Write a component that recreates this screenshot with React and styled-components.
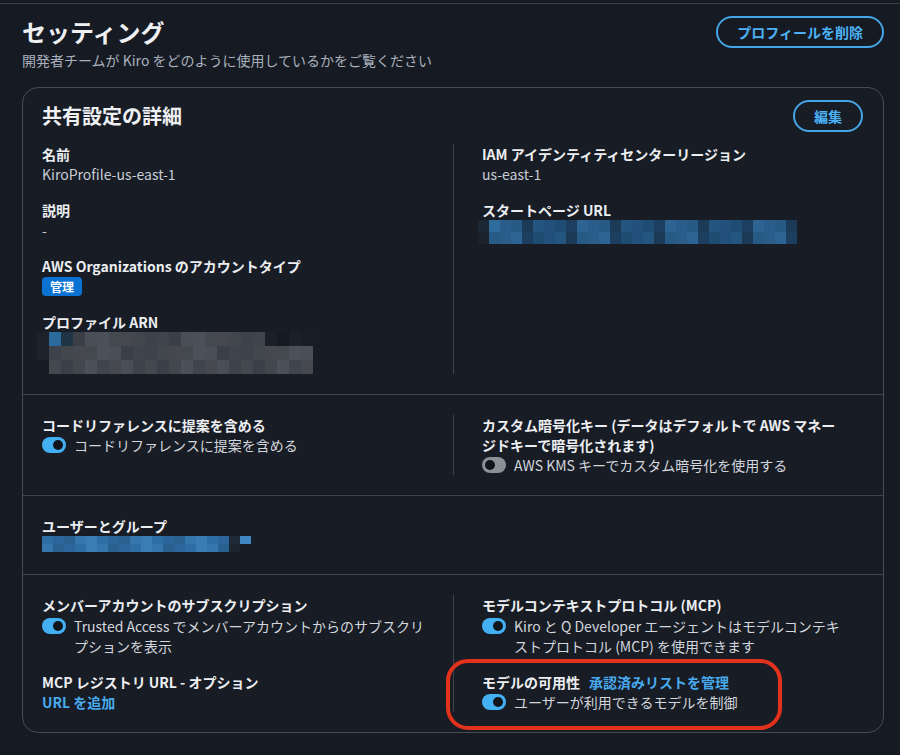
import React from 'react';
import styled, { createGlobalStyle } from 'styled-components';

const GlobalStyle = createGlobalStyle`
    html, body {
        margin: 0;
        padding: 0;
        background: #161a23;
    }
    body {
        font-family: "Noto Sans CJK JP", "Noto Sans", sans-serif;
        color: #d1d5db;
        font-size: 14px;
        line-height: 20px;
    }
`;

const Page = styled.div`
    width: 900px;
    height: 755px;
    box-sizing: border-box;
    border-top: 1px solid #3b4049;
    margin-top: 3px;
    padding: 12px 16px 0 22px;
    overflow: hidden;
`;

const PageHeader = styled.div`
    display: flex;
    align-items: center;
    justify-content: space-between;
`;

const Title = styled.h1`
    margin: 0;
    font-size: 24px;
    line-height: 30px;
    font-weight: 700;
    color: #eef0f3;
`;

const Subtitle = styled.p`
    margin: 2px 0 0;
    color: #aab1bc;
    font-size: 14px;
    line-height: 20px;
`;

const PillButton = styled.button`
    font-family: inherit;
    font-size: 14px;
    line-height: 20px;
    font-weight: 700;
    color: #4cb2f5;
    background: transparent;
    border: 2px solid #42a6e8;
    border-radius: 20px;
    padding: 4px 19px;
    cursor: pointer;
`;

const Card = styled.section`
    margin-top: 17px;
    border: 1px solid #464c55;
    border-radius: 16px;
    background: #171c25;
`;

const CardHeader = styled.div`
    display: flex;
    align-items: center;
    justify-content: space-between;
    padding: 12px 20px 0 19px;
`;

const CardTitle = styled.h2`
    margin: 0;
    font-size: 20px;
    line-height: 28px;
    font-weight: 700;
    color: #eef0f3;
`;

const Section = styled.div`
    display: grid;
    grid-template-columns: ${(p) => (p.$single ? '1fr' : '1fr 1fr')};
    padding: ${(p) => p.$pad || '20px 0'};
    border-top: ${(p) => (p.$first ? 'none' : '1px solid #3e444d')};
`;

const Column = styled.div`
    display: flex;
    flex-direction: column;
    gap: 16px;
    padding: ${(p) => (p.$right ? '0 40px 0 28px' : '0 28px 0 19px')};
    border-left: ${(p) => (p.$right ? '1px solid #3e444d' : 'none')};
`;

const Item = styled.div`
    position: relative;
    display: flex;
    flex-direction: column;
`;

const Label = styled.div`
    font-weight: 700;
    color: #eceef1;
    display: flex;
    gap: 9px;
`;

const Value = styled.div`
    color: #c9cdd4;
`;

const Link = styled.a`
    color: #48aaec;
    font-weight: 700;
    text-decoration: none;
    cursor: pointer;
`;

const Badge = styled.span`
    align-self: flex-start;
    margin-top: 1px;
    background: #0972d3;
    color: #ffffff;
    font-size: 12px;
    line-height: 19px;
    font-weight: 700;
    padding: 0 8px;
    border-radius: 4px;
`;

const ToggleRow = styled.div`
    display: flex;
    align-items: flex-start;
    gap: 8px;
    margin-top: ${(p) => p.$shift || 0}px;
    color: #d3d7dd;
`;

const Track = styled.span`
    flex: none;
    position: relative;
    width: 24px;
    height: 16px;
    margin-top: 2px;
    border-radius: 8px;
    background: ${(p) => (p.$on ? '#44b0f4' : '#8b8f96')};
`;

const Knob = styled.span`
    position: absolute;
    top: 3px;
    left: ${(p) => (p.$on ? '11px' : '3px')};
    width: 10px;
    height: 10px;
    border-radius: 50%;
    background: #10151c;
`;

const Mosaic = styled.div`
    display: flex;
    flex-direction: column;
    margin-left: ${(p) => p.$offset || 0}px;
    filter: blur(0.7px);
`;

const MosaicRow = styled.div`
    display: flex;
`;

const Cell = styled.span`
    width: ${(p) => p.$w}px;
    height: ${(p) => p.$h}px;
    background: ${(p) => p.$c};
`;

const Highlight = styled.div`
    position: absolute;
    left: -36px;
    top: -13px;
    width: 336px;
    height: 71px;
    box-sizing: border-box;
    border: 4px solid #e3321c;
    border-radius: 22px;
    pointer-events: none;
`;

const Toggle = ({ on, shift, children }) => (
    <ToggleRow $shift={shift}>
        <Track $on={on}>
            <Knob $on={on} />
        </Track>
        <span>{children}</span>
    </ToggleRow>
);

const Pixels = ({ rows, w, h, offset }) => (
    <Mosaic $offset={offset}>
        {rows.map((row, i) => (
            <MosaicRow key={i}>
                {row.map((c, j) => (
                    <Cell key={j} $w={w} $h={h} $c={c} />
                ))}
            </MosaicRow>
        ))}
    </Mosaic>
);

const g = ['#3b3f47', '#44484f', '#3e424a', '#4a4e56', '#45494f', '#40444c', '#4c5058', '#42464d'];
const arnRows = [
    ['#1b222c', '#2b6a9c', '#1f3445', ...Array.from({ length: 16 }, (_, i) => g[(i * 3) % 8]), '#1a1f28', '#141922', '#1c2129', '#181d26'],
    ['#1e232b', ...Array.from({ length: 22 }, (_, i) => g[(i * 5 + 2) % 8])],
    ['#171c25', ...Array.from({ length: 22 }, (_, i) => g[(i * 7 + 1) % 8])],
];

const b = ['#1f4c73', '#2a5d8a', '#24557f', '#1d3f5f', '#275a85', '#22507a', '#2e6494', '#1b3a58'];
const urlRows = [
    ['#1b2733', '#2f6c9e', ...Array.from({ length: 27 }, (_, i) => b[(i * 3 + 1) % 8])],
    ['#19222d', ...Array.from({ length: 28 }, (_, i) => b[(i * 5 + 4) % 8])],
];

const ub = ['#2f6ea4', '#3576ad', '#2b659a', '#3a7db5', '#28608f'];
const userRows = [
    [...Array.from({ length: 17 }, (_, i) => ub[(i * 2) % 5]), '#1e2a38', '#3f86c2'],
    [...Array.from({ length: 17 }, (_, i) => ub[(i * 3 + 1) % 5]), '#1c2530', '#171c25'],
];

const App = () => {
    return (
        <>
            <GlobalStyle />
            <Page>
                <PageHeader>
                    <Title>セッティング</Title>
                    <PillButton>プロフィールを削除</PillButton>
                </PageHeader>
                <Subtitle>開発者チームが Kiro をどのように使用しているかをご覧ください</Subtitle>

                <Card>
                    <CardHeader>
                        <CardTitle>共有設定の詳細</CardTitle>
                        <PillButton>編集</PillButton>
                    </CardHeader>

                    <Section $first $pad="12px 0 20px">
                        <Column>
                            <Item>
                                <Label>名前</Label>
                                <Value>KiroProfile-us-east-1</Value>
                            </Item>
                            <Item>
                                <Label>説明</Label>
                                <Value>-</Value>
                            </Item>
                            <Item>
                                <Label>AWS Organizations のアカウントタイプ</Label>
                                <Badge>管理</Badge>
                            </Item>
                            <Item>
                                <Label>プロファイル ARN</Label>
                                <Pixels rows={arnRows} w={12} h={14} offset={-5} />
                            </Item>
                        </Column>
                        <Column $right>
                            <Item>
                                <Label>IAM アイデンティティセンターリージョン</Label>
                                <Value>us-east-1</Value>
                            </Item>
                            <Item>
                                <Label>スタートページ URL</Label>
                                <Pixels rows={urlRows} w={11} h={12} offset={-4} />
                            </Item>
                        </Column>
                    </Section>

                    <Section>
                        <Column>
                            <Item>
                                <Label>コードリファレンスに提案を含める</Label>
                                <Toggle on>コードリファレンスに提案を含める</Toggle>
                            </Item>
                        </Column>
                        <Column $right>
                            <Item>
                                <Label>カスタム暗号化キー (データはデフォルトで AWS マネージドキーで暗号化されます)</Label>
                                <Toggle>AWS KMS キーでカスタム暗号化を使用する</Toggle>
                            </Item>
                        </Column>
                    </Section>

                    <Section $single $pad="20px 0 22px">
                        <Column>
                            <Item>
                                <Label>ユーザーとグループ</Label>
                                <Pixels rows={userRows} w={11} h={8} offset={0} />
                            </Item>
                        </Column>
                    </Section>

                    <Section $pad="20px 0 20px">
                        <Column>
                            <Item>
                                <Label>メンバーアカウントのサブスクリプション</Label>
                                <Toggle on shift={1}>Trusted Access でメンバーアカウントからのサブスクリプションを表示</Toggle>
                            </Item>
                            <Item>
                                <Label>MCP レジストリ URL - オプション</Label>
                                <Link>URL を追加</Link>
                            </Item>
                        </Column>
                        <Column $right>
                            <Item>
                                <Label>モデルコンテキストプロトコル (MCP)</Label>
                                <Toggle on shift={1}>Kiro と Q Developer エージェントはモデルコンテキストプロトコル (MCP) を使用できます</Toggle>
                            </Item>
                            <Item>
                                <Label>
                                    モデルの可用性
                                    <Link>承認済みリストを管理</Link>
                                </Label>
                                <Toggle on>ユーザーが利用できるモデルを制御</Toggle>
                                <Highlight />
                            </Item>
                        </Column>
                    </Section>
                </Card>
            </Page>
        </>
    );
};

export default App;
